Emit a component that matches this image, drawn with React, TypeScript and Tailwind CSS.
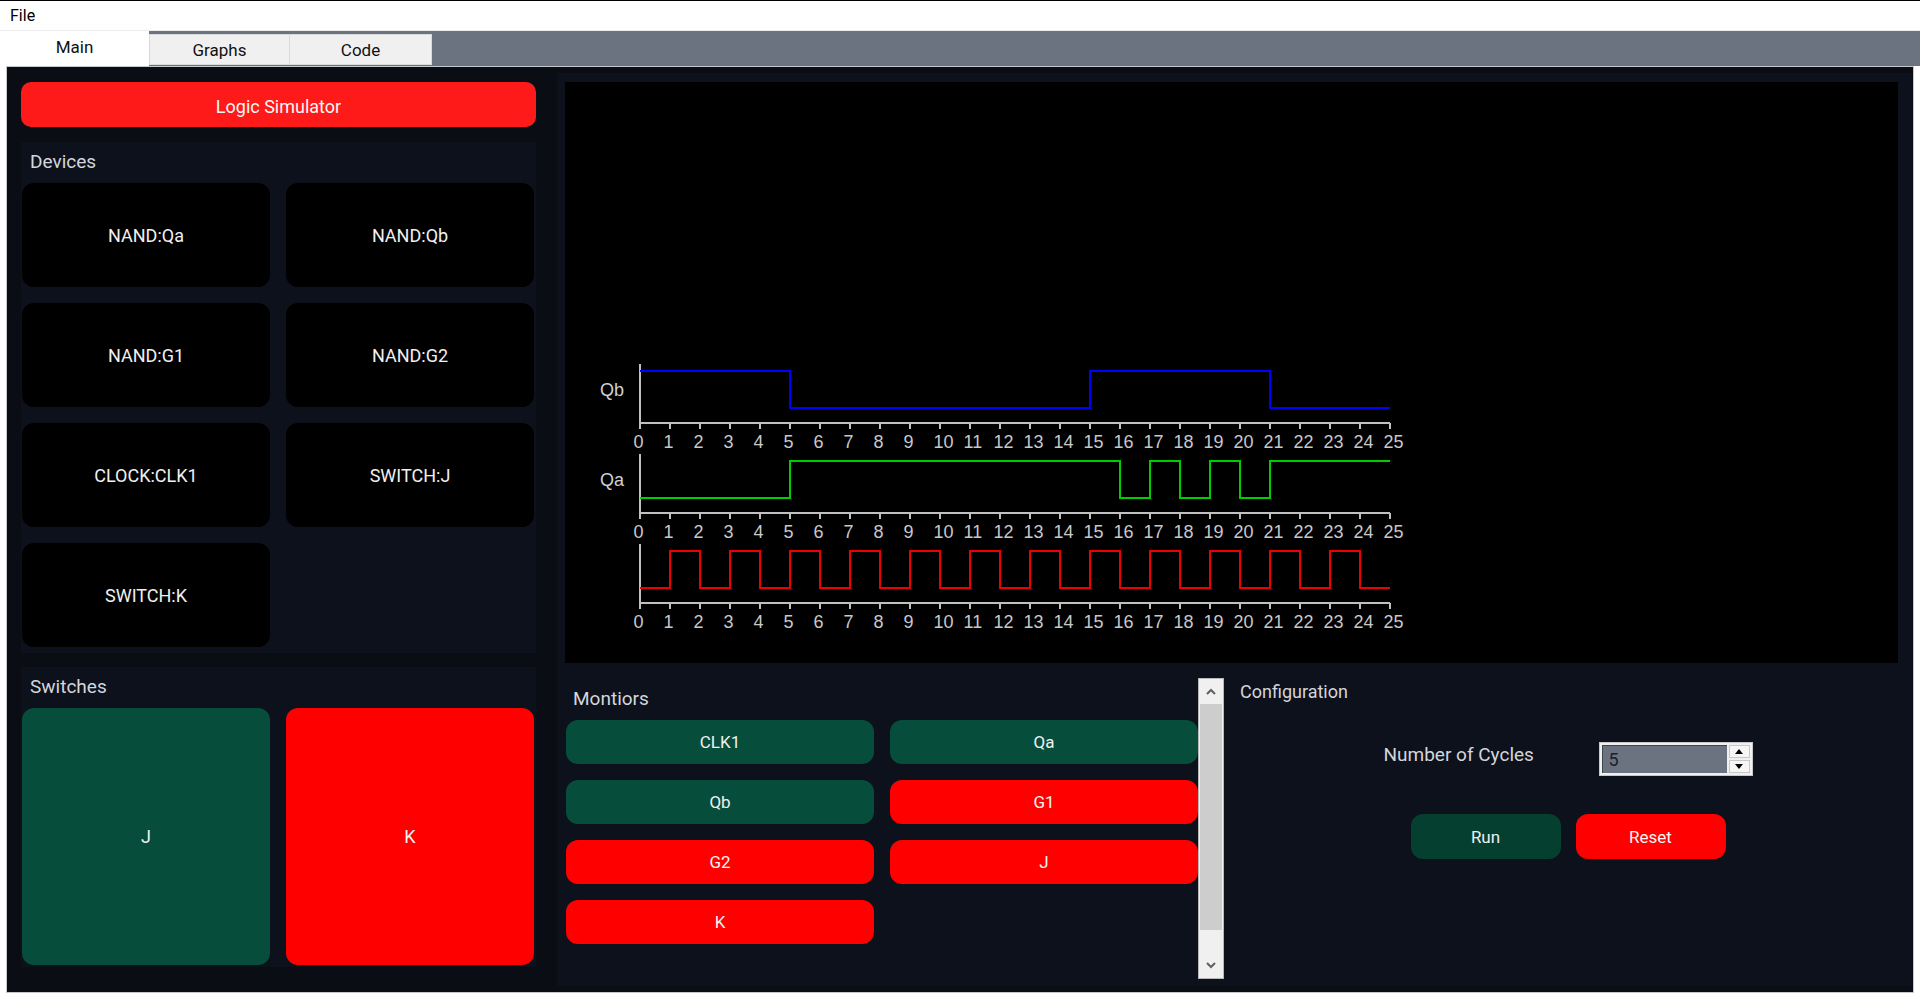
import React from "react";

const X0 = 75;
const U = 30;
const xt = (t: number) => X0 + U * t;

function stepPath(levels: number[], hi: number, lo: number) {
  let d = `M${xt(0)},${levels[0] ? hi : lo}`;
  let prev = levels[0];
  for (let i = 1; i < levels.length; i++) {
    const v = levels[i];
    if (v !== prev) {
      d += ` H${xt(i)} V${v ? hi : lo}`;
      prev = v;
    }
  }
  d += ` H${xt(levels.length)}`;
  return d;
}

const qb = Array.from({ length: 25 }, (_, i) => (i < 5 || (i >= 15 && i < 21) ? 1 : 0));
const qa = Array.from({ length: 25 }, (_, i) => {
  if (i < 5) return 0;
  if (i < 16) return 1;
  if (i === 16 || i === 18 || i === 20) return 0;
  return 1;
});
const clk = Array.from({ length: 25 }, (_, i) => (i % 2 === 1 && i < 24 ? 1 : 0));

function Trace({
  top,
  levels,
  color,
  label,
}: {
  top: number;
  levels: number[];
  color: string;
  label?: string;
}) {
  const hi = top + 7;
  const lo = top + 44;
  const axis = top + 59;
  const ticks = Array.from({ length: 26 }, (_, i) => i);
  return (
    <g>
      {label && (
        <text
          x={47}
          y={(hi + lo) / 2 + 6.5}
          textAnchor="middle"
          fontFamily="'Liberation Sans', Arial, sans-serif"
          fontSize={18}
          fill="#d0d0d0"
        >
          {label}
        </text>
      )}
      <line x1={X0} y1={top} x2={X0} y2={axis} stroke="#c0c0c0" strokeWidth={2} />
      <line x1={X0} y1={axis} x2={xt(25)} y2={axis} stroke="#c0c0c0" strokeWidth={2} />
      {ticks.map((t) => (
        <line key={t} x1={xt(t)} y1={axis} x2={xt(t)} y2={axis + 6} stroke="#c0c0c0" strokeWidth={2} />
      ))}
      {ticks.map((t) => (
        <text
          key={"l" + t}
          x={xt(t) - 6.5}
          y={axis + 25}
          fontFamily="'Liberation Sans', Arial, sans-serif"
          fontSize={18}
          fill="#c8c8c8"
        >
          {t}
        </text>
      ))}
      <path d={stepPath(levels, hi, lo)} fill="none" stroke={color} strokeWidth={2} />
    </g>
  );
}

function DeviceBtn({ label }: { label: string }) {
  return (
    <div className="h-[104px] rounded-[12px] bg-black flex items-center justify-center text-[18px] text-[#f0f0f0]">
      {label}
    </div>
  );
}

function MonBtn({ label, on }: { label: string; on: boolean }) {
  return (
    <div
      className={
        on
          ? "h-[44px] rounded-[12px] bg-[#064e3b] flex items-center justify-center pt-[2px] text-[17px] text-[#f0f0f0]"
          : "h-[44px] rounded-[12px] bg-[#ff0000] flex items-center justify-center pt-[2px] text-[17px] text-[#f5f5f5]"
      }
    >
      {label}
    </div>
  );
}

export default function App() {
  return (
    <div className="w-[1920px] h-[997px] bg-white flex flex-col overflow-hidden [font-family:Roboto,'Liberation_Sans',sans-serif]">
      {/* menu bar */}
      <div className="h-[31px] border-t border-black border-b border-b-[#ececec] bg-white flex items-center pl-[10px] text-[16px] text-black">
        File
      </div>
      {/* tab row */}
      <div className="h-[35px] flex bg-white">
        <div className="w-[149px] bg-white flex items-start justify-center pt-[4px] text-[17px] text-[#111]">
          Main
        </div>
        <div className="flex-1 bg-[#6b7280] flex items-end pb-[1px]">
          <div className="w-[141px] h-[31px] bg-[#f0f0f0] border border-[#d9d9d9] flex items-center justify-center pt-[2px] text-[17px] text-[#111]">
            Graphs
          </div>
          <div className="w-[142px] h-[31px] bg-[#f0f0f0] border border-l-0 border-[#d9d9d9] flex items-center justify-center pt-[2px] text-[17px] text-[#111]">
            Code
          </div>
        </div>
      </div>
      {/* main panel */}
      <div className="mx-[6px] h-[927px] bg-[#0a0d14] border border-[#c4c7cc] flex pl-[14px] pr-[1px]">
        {/* left column */}
        <div className="w-[515px] flex flex-col pt-[15px]">
          <div className="h-[45px] rounded-[10px] bg-[#ff1a1a] flex items-center justify-center pt-[3px] text-[18px] text-[#f7f7f7]">
            Logic Simulator
          </div>
          <div className="mt-[15px] bg-[#0d111b] pl-[1px] pr-[2px] pb-[6px]">
            <div className="h-[41px] flex items-center pl-[8px] text-[19px] text-[#d4d6db]">Devices</div>
            <div className="grid grid-cols-2 gap-x-[16px] gap-y-[16px]">
              <DeviceBtn label="NAND:Qa" />
              <DeviceBtn label="NAND:Qb" />
              <DeviceBtn label="NAND:G1" />
              <DeviceBtn label="NAND:G2" />
              <DeviceBtn label="CLOCK:CLK1" />
              <DeviceBtn label="SWITCH:J" />
              <DeviceBtn label="SWITCH:K" />
            </div>
          </div>
          <div className="mt-[14px] bg-[#0d111b] pl-[1px] pr-[2px] pb-[2px]">
            <div className="h-[41px] flex items-center pl-[8px] text-[19px] text-[#d4d6db]">Switches</div>
            <div className="grid grid-cols-2 gap-x-[16px]">
              <div className="h-[257px] rounded-[12px] bg-[#064e3b] flex items-center justify-center text-[18px] text-[#f0f0f0]">
                J
              </div>
              <div className="h-[257px] rounded-[12px] bg-[#ff0000] flex items-center justify-center text-[18px] text-[#f5f5f5]">
                K
              </div>
            </div>
          </div>
        </div>
        {/* right column */}
        <div className="ml-[21px] w-[1355px] mt-[6px] h-[913px] bg-[#0d111b] flex flex-col">
          <div className="ml-[8px] mr-[14px] mt-[9px] h-[581px] bg-black">
            <svg width="1333" height="581" className="block">
              <Trace top={282} levels={qb} color="#0000ff" label="Qb" />
              <Trace top={372} levels={qa} color="#00cc00" label="Qa" />
              <Trace top={462} levels={clk} color="#ee0000" />
            </svg>
          </div>
          <div className="flex flex-1">
            {/* monitors */}
            <div className="w-[641px] pl-[9px] pt-[24px]">
              <div className="h-[24px] flex items-center pl-[7px] text-[19px] text-[#d4d6db]">Montiors</div>
              <div className="mt-[9px] grid grid-cols-2 gap-x-[16px] gap-y-[16px]">
                <MonBtn label="CLK1" on />
                <MonBtn label="Qa" on />
                <MonBtn label="Qb" on />
                <MonBtn label="G1" on={false} />
                <MonBtn label="G2" on={false} />
                <MonBtn label="J" on={false} />
                <MonBtn label="K" on={false} />
              </div>
            </div>
            {/* scrollbar */}
            <div className="w-[26px] mt-[15px] h-[301px] bg-[#f0f0f0] border border-[#b8b8b8] flex flex-col">
              <div className="h-[25px] flex items-center justify-center">
                <svg width="10" height="7" viewBox="0 0 10 7">
                  <polyline points="1,6 5,2 9,6" fill="none" stroke="#606060" strokeWidth="2" />
                </svg>
              </div>
              <div className="h-[226px] mx-[1px] bg-[#cdcdcd]" />
              <div className="flex-1" />
              <div className="h-[25px] flex items-center justify-center">
                <svg width="10" height="7" viewBox="0 0 10 7">
                  <polyline points="1,1 5,5 9,1" fill="none" stroke="#606060" strokeWidth="2" />
                </svg>
              </div>
            </div>
            {/* configuration */}
            <div className="flex-1 flex flex-col pt-[16px]">
              <div className="h-[24px] flex items-center pl-[16px] text-[18px] text-[#d4d6db]">Configuration</div>
              <div className="mt-[39px] h-[34px] flex items-center justify-center gap-[61px]">
                <div className="w-[154px] text-[19px] text-[#d4d6db] leading-none pb-[9px] whitespace-nowrap">
                  Number of Cycles
                </div>
                <div className="w-[154px] h-[34px] bg-[#f0f0f0] border border-[#c8c8c8] p-[2px] flex">
                  <div className="flex-1 bg-[#6b7280] border-t border-l border-[#3f4550] flex items-center pl-[6px] text-[18px] text-[#1a1f2a]">
                    5
                  </div>
                  <div className="w-[23px] flex flex-col justify-between pl-[2px]">
                    <div className="h-[13px] bg-[#f6f6f6] border border-[#c8c8c8] flex items-center justify-center">
                      <svg width="8" height="5" viewBox="0 0 8 5">
                        <polygon points="0,5 4,0 8,5" fill="#000" />
                      </svg>
                    </div>
                    <div className="h-[13px] bg-[#f6f6f6] border border-[#c8c8c8] flex items-center justify-center">
                      <svg width="8" height="5" viewBox="0 0 8 5">
                        <polygon points="0,0 8,0 4,5" fill="#000" />
                      </svg>
                    </div>
                  </div>
                </div>
              </div>
              <div className="mt-[38px] flex justify-center gap-[15px]">
                <div className="w-[150px] h-[45px] rounded-[12px] bg-[#053f30] flex items-center justify-center pt-[2px] text-[17px] text-[#f0f0f0]">
                  Run
                </div>
                <div className="w-[150px] h-[45px] rounded-[12px] bg-[#ff0000] flex items-center justify-center pt-[2px] text-[17px] text-[#f5f5f5]">
                  Reset
                </div>
              </div>
            </div>
          </div>
        </div>
      </div>
    </div>
  );
}
